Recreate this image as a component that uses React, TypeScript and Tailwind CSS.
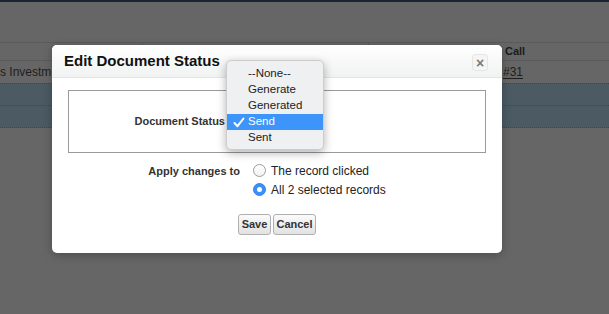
import React from "react";

function Radio({ checked }: { checked?: boolean }) {
  if (checked) {
    return (
      <span className="flex h-[13px] w-[13px] items-center justify-center rounded-full bg-[#3b8ff6] border border-[#3483e8]">
        <span className="h-[5px] w-[5px] rounded-full bg-white" />
      </span>
    );
  }
  return (
    <span className="h-[13px] w-[13px] rounded-full border border-[#9c9c9c] bg-gradient-to-b from-white to-[#f2f2f2]" />
  );
}

export default function App() {
  const options = ["--None--", "Generate", "Generated", "Send", "Sent"];
  return (
    <div className="relative h-[314px] w-[609px] overflow-hidden bg-[#666666] font-['Liberation_Sans',Arial,sans-serif]">
      {/* background page */}
      <div className="h-[2px] bg-[#1a2533]" />
      <div className="h-[40px]" />
      <div className="flex h-[19px] items-center border-y border-[#5b5b5b] text-[11px] font-bold text-[#1c1c1c]">
        <div className="h-full w-[143px] border-r border-[#5b5b5b]" />
        <div className="h-full w-[226px] border-r border-[#5b5b5b]" />
        <div className="flex-1 pl-[136px]">Call</div>
      </div>
      <div className="flex h-[22px] items-center text-[12px] text-[#1e1e1e]">
        <div className="w-[52px] overflow-hidden whitespace-nowrap">s Investm</div>
        <div className="w-[451px]" />
        <div className="underline underline-offset-2">#31</div>
      </div>
      <div className="h-[22px] border-t border-dotted border-[#3c474e] bg-[#4b5a63]" />
      <div className="h-[23px] border-y border-dotted border-[#3c474e] bg-[#4b5a63]" />

      {/* modal */}
      <div className="absolute left-[52px] top-[45px] flex h-[208px] w-[450px] flex-col rounded-[5px] bg-white shadow-[0_2px_10px_rgba(0,0,0,0.25)]">
        <div className="relative flex h-[33px] items-center rounded-t-[5px] border-b border-[#e4e4e4] bg-gradient-to-b from-white to-[#f1f2f2] pl-[12px]">
          <span className="text-[15px] font-bold text-[#111]">Edit Document Status</span>
          <div className="absolute right-[14px] top-[9px] flex h-[17px] w-[16px] items-center justify-center rounded-[3px] border border-[#e6e6e6] bg-[#f5f5f5] text-[14px] font-bold leading-none text-[#7a7a7a]">
            ×
          </div>
        </div>
        <div className="px-[16px] pt-[12px]">
          <div className="flex h-[63px] items-center border border-[#9a9a9a]">
            <div className="w-[156px] text-right text-[11px] font-bold text-[#333]">Document Status</div>
          </div>
        </div>
        <div className="mt-[9px] flex">
          <div className="w-[188px] pt-[1px] text-right text-[11px] font-bold text-[#333]">Apply changes to</div>
          <div className="ml-[13px] flex flex-col gap-[6px] pt-[2px] text-[12px] text-[#222]">
            <div className="flex h-[13px] items-center gap-[5px]">
              <Radio />
              <span>The record clicked</span>
            </div>
            <div className="flex h-[13px] items-center gap-[5px]">
              <Radio checked />
              <span>All 2 selected records</span>
            </div>
          </div>
        </div>
        <div className="mt-[18px] flex justify-center gap-[2px]">
          <button className="h-[21px] w-[33px] rounded-[3px] border border-[#b0b0b0] bg-gradient-to-b from-[#fbfbfb] to-[#e2e2e2] text-[11px] font-bold text-[#333]">
            Save
          </button>
          <button className="h-[21px] w-[43px] rounded-[3px] border border-[#b0b0b0] bg-gradient-to-b from-[#fbfbfb] to-[#e2e2e2] text-[11px] font-bold text-[#333]">
            Cancel
          </button>
        </div>
      </div>

      {/* open dropdown */}
      <div className="absolute left-[226px] top-[60px] w-[98px] rounded-[5px] border border-[#cdcdcd] bg-[#eef0f1] pb-[3px] pt-[5px] shadow-[0_3px_10px_rgba(0,0,0,0.3)]">
        {options.map((o) => {
          const sel = o === "Send";
          return (
            <div
              key={o}
              className={
                sel
                  ? "flex h-[16px] items-center bg-[#3d95fb] text-[11.5px] text-white"
                  : "flex h-[16px] items-center text-[11.5px] text-[#222]"
              }
            >
              <span className="flex w-[21px] justify-center pl-[2px]">
                {sel ? (
                  <svg width="12" height="11" viewBox="0 0 12 11">
                    <path d="M1.5 6 L4.5 9.2 L10.5 1.5" fill="none" stroke="white" strokeWidth="2" strokeLinecap="round" strokeLinejoin="round" />
                  </svg>
                ) : null}
              </span>
              <span>{o}</span>
            </div>
          );
        })}
      </div>
    </div>
  );
}
